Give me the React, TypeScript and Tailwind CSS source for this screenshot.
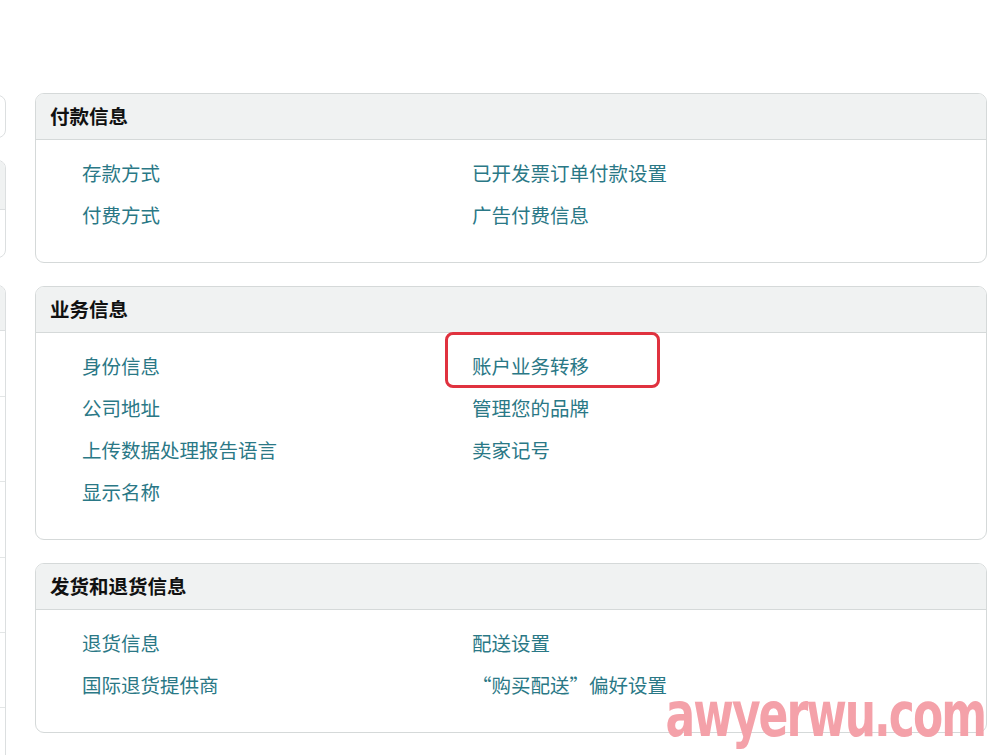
const font = { fontFamily: '"Noto Sans CJK SC", "Liberation Sans", sans-serif' }

interface SectionProps {
    title: string
    left: string[]
    right: string[]
    children?: React.ReactNode
}

const Section: React.FC<SectionProps> = ({ title, left, right, children }) => {
    const rows = Math.max(left.length, right.length)
    return (
        <div className="relative rounded-[9px] border border-[#d5d9d9] bg-white overflow-hidden">
            <div className="h-[46px] flex items-center px-[14px] pb-[2px] bg-[#f0f2f2] border-b border-[#d5d9d9]">
                <h3 className="text-[19.5px] font-bold text-[#111] leading-none">{title}</h3>
            </div>
            <div className="pl-[46px] pt-[12px] pb-[26px]">
                {Array.from({ length: rows }).map((_, i) => (
                    <div key={i} className="flex h-[42px] items-center">
                        <a className="w-[390px] text-[19.5px] text-[#2a7886] leading-none">{left[i] ?? ''}</a>
                        <a className="text-[19.5px] text-[#2a7886] leading-none">{right[i] ?? ''}</a>
                    </div>
                ))}
            </div>
            {children}
        </div>
    )
}

const SideColumn = () => (
    <div className="w-[6px] shrink-0 overflow-hidden">
        <div className="w-[240px] ml-[-234px] pt-[95px] flex flex-col">
            <div className="h-[43px] rounded-[8px] border border-[#dcdfe0] bg-white" />
            <div className="mt-[22px] h-[98px] rounded-[8px] border border-[#dcdfe0] bg-white overflow-hidden">
                <div className="h-[49px] bg-[#f0f2f2] border-b border-[#dcdfe0]" />
            </div>
            <div className="mt-[27px] h-[480px] rounded-t-[8px] border border-[#dcdfe0] bg-white overflow-hidden">
                <div className="h-[45px] bg-[#f0f2f2] border-b border-[#dcdfe0]" />
                <div className="h-[66px] border-b border-[#e3e6e6]" />
                <div className="h-[85px] border-b border-[#e3e6e6]" />
                <div className="h-[76px] border-b border-[#e3e6e6]" />
                <div className="h-[75px] border-b border-[#e3e6e6]" />
                <div className="h-[75px] border-b border-[#e3e6e6]" />
            </div>
        </div>
    </div>
)

export default function App() {
    return (
        <div className="relative w-[1000px] h-[755px] bg-white overflow-hidden" style={font}>
            <div className="flex gap-[29px]">
                <SideColumn />
                <div className="w-[952px] pt-[93px] flex flex-col gap-[23px]">
                    <Section
                        title="付款信息"
                        left={['存款方式', '付费方式']}
                        right={['已开发票订单付款设置', '广告付费信息']}
                    />
                    <Section
                        title="业务信息"
                        left={['身份信息', '公司地址', '上传数据处理报告语言', '显示名称']}
                        right={['账户业务转移', '管理您的品牌', '卖家记号']}
                    >
                        <div className="absolute left-[409px] top-[45px] w-[215px] h-[56px] rounded-[8px] border-[3px] border-[#e0323f]" />
                    </Section>
                    <Section
                        title="发货和退货信息"
                        left={['退货信息', '国际退货提供商']}
                        right={['配送设置', '“购买配送”偏好设置']}
                    />
                </div>
            </div>
            <div
                className="absolute right-[15px] bottom-[9px] text-[44px] font-black leading-none text-[#f4a1a9] tracking-[-2px] scale-y-[1.4] origin-bottom"
                style={{ fontFamily: '"DejaVu Sans", sans-serif' }}
            >
                awyerwu.com
            </div>
        </div>
    )
}
